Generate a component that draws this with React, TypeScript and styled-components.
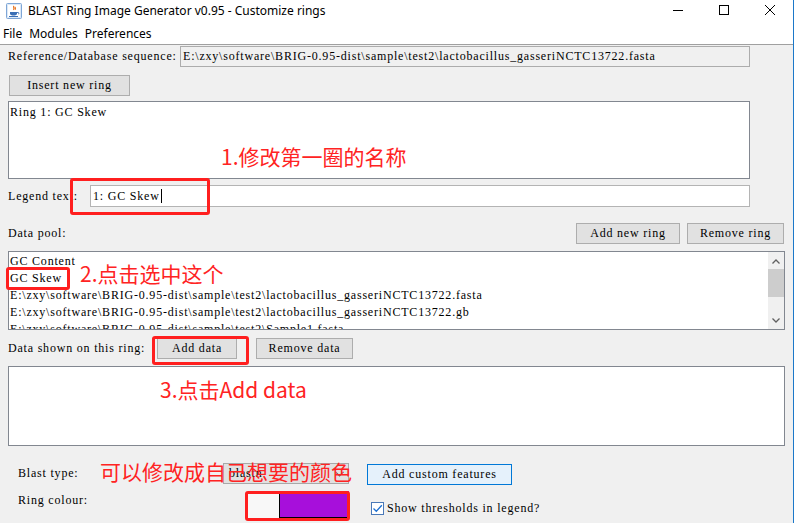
import React from 'react'
import styled, { createGlobalStyle } from 'styled-components'

const GlobalStyle = createGlobalStyle`
  html, body {
    margin: 0;
    padding: 0;
    background: #ffffff;
  }
  #root {
    width: 796px;
    height: 523px;
    overflow: hidden;
  }
`

const uiFont = `"Liberation Serif", "Noto Sans CJK SC", serif`

const Window = styled.div`
  position: relative;
  width: 793px;
  height: 523px;
  background: #f0f0f0;
  border-right: 1px solid #1b78c9;
  display: flex;
  flex-direction: column;
  overflow: hidden;
  font-family: ${uiFont};
  font-size: 12px;
  letter-spacing: 0.8px;
  color: #000;
`

const TitleBar = styled.div`
  height: 23px;
  background: #fff;
  display: flex;
  align-items: center;
  font-family: "Noto Sans", "Liberation Sans", sans-serif;
  font-size: 12px;
  letter-spacing: 0;
`

const AppIcon = styled.svg`
  width: 16px;
  height: 16px;
  margin: 0 6px 2px 6px;
  flex: none;
`

const Title = styled.div`
  flex: 1;
  padding-bottom: 2px;
`

const WinButton = styled.div`
  width: 46px;
  height: 23px;
  display: flex;
  align-items: center;
  justify-content: center;
  padding-bottom: 3px;
  box-sizing: border-box;
`

const MenuBar = styled.div`
  height: 21px;
  background: #fff;
  border-bottom: 1px solid #a0a0a0;
  display: flex;
  align-items: center;
  padding-left: 3px;
  font-family: "Noto Sans", "Liberation Sans", sans-serif;
  font-size: 12px;
  letter-spacing: 0;
  gap: 7px;
`

const Content = styled.div`
  display: flex;
  flex-direction: column;
  padding: 0 8px;
`

const Row = styled.div<{ $top: number; $h: number; $right?: number }>`
  display: flex;
  align-items: center;
  margin-top: ${p => p.$top}px;
  margin-right: ${p => p.$right ?? 0}px;
  height: ${p => p.$h}px;
`

const Label = styled.span<{ $w?: number; $indent?: number }>`
  flex: none;
  width: ${p => (p.$w ? `${p.$w}px` : 'auto')};
  padding-left: ${p => p.$indent ?? 0}px;
  white-space: nowrap;
`

const Field = styled.div`
  flex: 1;
  height: 100%;
  box-sizing: border-box;
  background: #fff;
  border: 1px solid #b4b4b4;
  display: flex;
  align-items: center;
  padding-left: 2px;
  white-space: nowrap;
  overflow: hidden;
`

const ReadField = styled(Field)`
  background: #f0f0f0;
  border-color: #acacac;
`

const Caret = styled.span`
  display: inline-block;
  width: 1px;
  height: 14px;
  background: #000;
  margin-left: 1px;
`

const Button = styled.div<{ $w: number; $ml?: number }>`
  flex: none;
  width: ${p => p.$w}px;
  height: 21px;
  margin-left: ${p => p.$ml ?? 0}px;
  box-sizing: border-box;
  background: #e1e1e1;
  border: 1px solid #adadad;
  display: flex;
  align-items: center;
  justify-content: center;
  white-space: nowrap;
`

const FocusButton = styled(Button)`
  background: #e5f1fb;
  border-color: #0078d7;
`

const TextBox = styled.div<{ $top: number; $h: number; $right?: number }>`
  margin-top: ${p => p.$top}px;
  margin-right: ${p => p.$right ?? 0}px;
  height: ${p => p.$h}px;
  box-sizing: border-box;
  background: #fff;
  border: 1px solid #828790;
  display: flex;
  overflow: hidden;
`

const Lines = styled.div`
  flex: 1;
  padding: 1px 1px;
  line-height: 17px;
  white-space: nowrap;
  overflow: hidden;
`

const Spacer = styled.div`
  flex: 1;
`

const ScrollBar = styled.div`
  width: 16px;
  flex: none;
  background: #f0f0f0;
  display: flex;
  flex-direction: column;
  align-items: center;
`

const ScrollArrow = styled.svg`
  width: 16px;
  height: 17px;
  flex: none;
`

const Thumb = styled.div`
  width: 16px;
  height: 28px;
  background: #cdcdcd;
`

const Grid = styled.div<{ $top: number; $h: number }>`
  display: grid;
  grid-template-columns: 215px 126px auto;
  align-items: center;
  margin-top: ${p => p.$top}px;
  height: ${p => p.$h}px;
`

const Combo = styled.div`
  height: 21px;
  box-sizing: border-box;
  background: #e1e1e1;
  border: 1px solid #a8a8a8;
  display: flex;
  align-items: center;
  justify-content: space-between;
  padding: 0 4px 0 5px;
`

const ColourCell = styled.div`
  display: flex;
  height: 27px;
  align-self: start;
  margin-top: 2px;
`

const BlankPart = styled.div`
  width: 32px;
  margin-left: 24px;
  background: #f8f8f8;
`

const ColourPart = styled.div<{ $c: string }>`
  flex: 1;
  background: ${p => p.$c};
  border-left: 1px solid #000;
  border-bottom: 1px solid #000;
`

const CheckRow = styled.div`
  display: flex;
  align-items: center;
  gap: 3px;
  margin-top: 8px;
  margin-left: 22px;
  white-space: nowrap;
`

const CheckBox = styled.div`
  width: 13px;
  height: 13px;
  box-sizing: border-box;
  border: 1px solid #4a79b8;
  background: #fff;
  display: flex;
  align-items: center;
  justify-content: center;
`

const Note = styled.div<{ $x: number; $y: number }>`
  position: absolute;
  left: ${p => p.$x}px;
  top: ${p => p.$y}px;
  font-family: "Noto Sans CJK SC", "Noto Sans", sans-serif;
  font-size: 21px;
  line-height: 1;
  letter-spacing: 0;
  color: #ff2323;
  white-space: nowrap;
`

const Mark = styled.div<{ $x: number; $y: number; $w: number; $h: number }>`
  position: absolute;
  left: ${p => p.$x}px;
  top: ${p => p.$y}px;
  width: ${p => p.$w}px;
  height: ${p => p.$h}px;
  box-sizing: border-box;
  border: 3px solid #ff1f1f;
  border-radius: 3px;
`

const poolItems = [
  'GC Content',
  'GC Skew',
  'E:\\zxy\\software\\BRIG-0.95-dist\\sample\\test2\\lactobacillus_gasseriNCTC13722.fasta',
  'E:\\zxy\\software\\BRIG-0.95-dist\\sample\\test2\\lactobacillus_gasseriNCTC13722.gb',
  'E:\\zxy\\software\\BRIG-0.95-dist\\sample\\test2\\Sample1.fasta',
]

const App = () => {
  return (
    <>
      <GlobalStyle />
      <Window>
        <TitleBar>
          <AppIcon viewBox="0 0 16 16">
            <rect x="0.5" y="0.5" width="15" height="15" rx="1" fill="#dce9f7" stroke="#7fa6d6" />
            <rect x="2" y="2" width="12" height="12" fill="#fff" />
            <path d="M8 3c-1.5 1.5 1 2-0.5 4M9.5 4c-1 1 0.6 1.4-0.3 2.6" stroke="#e8731e" strokeWidth="1.2" fill="none" />
            <path d="M4 9h7v1.5c0 1.5-1.5 2-3.5 2S4 12 4 10.5z" fill="#3a6fb5" />
            <path d="M11 9.5h1.3c0.8 0 0.8 1.6-0.3 1.6" stroke="#3a6fb5" strokeWidth="0.9" fill="none" />
            <rect x="3" y="13" width="9" height="1" fill="#3a6fb5" />
          </AppIcon>
          <Title>BLAST Ring Image Generator v0.95 - Customize rings</Title>
          <WinButton>
            <svg width="10" height="10" viewBox="0 0 10 10">
              <line x1="0" y1="5.5" x2="10" y2="5.5" stroke="#000" strokeWidth="1" />
            </svg>
          </WinButton>
          <WinButton>
            <svg width="10" height="10" viewBox="0 0 10 10">
              <rect x="0.5" y="0.5" width="9" height="9" fill="none" stroke="#000" strokeWidth="1" />
            </svg>
          </WinButton>
          <WinButton>
            <svg width="10" height="10" viewBox="0 0 10 10">
              <path d="M0 0L10 10M10 0L0 10" stroke="#000" strokeWidth="1" />
            </svg>
          </WinButton>
        </TitleBar>
        <MenuBar>
          <span>File</span>
          <span>Modules</span>
          <span>Preferences</span>
        </MenuBar>

        <Content>
          <Row $top={1} $h={21} $right={35}>
            <Label $w={172}>Reference/Database sequence:</Label>
            <ReadField>E:\zxy\software\BRIG-0.95-dist\sample\test2\lactobacillus_gasseriNCTC13722.fasta</ReadField>
          </Row>

          <Row $top={8} $h={21}>
            <Button $w={121} $ml={1}>Insert new ring</Button>
          </Row>

          <TextBox $top={5} $h={78} $right={35}>
            <Lines style={{ paddingTop: 2 }}>Ring 1: GC Skew</Lines>
          </TextBox>

          <Row $top={6} $h={22} $right={35}>
            <Label $w={82}>Legend text:</Label>
            <Field>
              1: GC Skew<Caret />
            </Field>
          </Row>

          <Row $top={16} $h={21}>
            <Label>Data pool:</Label>
            <Spacer />
            <Button $w={104}>Add new ring</Button>
            <Button $w={97} $ml={7}>Remove ring</Button>
            <Label $w={1} />
          </Row>

          <TextBox $top={7} $h={79}>
            <Lines>
              {poolItems.map(item => (
                <div key={item}>{item}</div>
              ))}
            </Lines>
            <ScrollBar>
              <ScrollArrow viewBox="0 0 16 17">
                <path d="M4.5 11.5L8 8l3.5 3.5" stroke="#606060" strokeWidth="1.3" fill="none" />
              </ScrollArrow>
              <Thumb />
              <Spacer />
              <ScrollArrow viewBox="0 0 16 17">
                <path d="M4.5 6.5L8 10l3.5-3.5" stroke="#606060" strokeWidth="1.3" fill="none" />
              </ScrollArrow>
            </ScrollBar>
          </TextBox>

          <Row $top={8} $h={21}>
            <Label $w={149}>Data shown on this ring:</Label>
            <Button $w={80}>Add data</Button>
            <Button $w={97} $ml={19}>Remove data</Button>
          </Row>

          <TextBox $top={7} $h={80} />

          <Grid $top={16} $h={21}>
            <Label $indent={10}>Blast type:</Label>
            <Combo>
              <span>blastn</span>
              <svg width="9" height="6" viewBox="0 0 9 6">
                <path d="M0.5 0.8L4.5 4.8L8.5 0.8" stroke="#606060" strokeWidth="1.2" fill="none" />
              </svg>
            </Combo>
            <FocusButton $w={145} $ml={18} style={{ marginTop: 2 }}>Add custom features</FocusButton>
          </Grid>

          <Grid $top={6} $h={31}>
            <Label $indent={10} style={{ alignSelf: 'start', marginTop: 4 }}>Ring colour:</Label>
            <ColourCell>
              <BlankPart />
              <ColourPart $c="#a70fdb" />
            </ColourCell>
            <CheckRow>
              <CheckBox>
                <svg width="11" height="11" viewBox="0 0 11 11">
                  <path d="M1.5 5.5L4.3 8.3L9.8 2.3" stroke="#1c6fd1" strokeWidth="1.3" fill="none" />
                </svg>
              </CheckBox>
              <span>Show thresholds in legend?</span>
            </CheckRow>
          </Grid>
        </Content>

        <Note $x={221} $y={146}>1.修改第一圈的名称</Note>
        <Mark $x={70} $y={178} $w={140} $h={37} />
        <Note $x={80} $y={263}>2.点击选中这个</Note>
        <Mark $x={6} $y={267} $w={64} $h={23} />
        <Mark $x={152} $y={336} $w={97} $h={29} />
        <Note $x={160} $y={379}>3.点击Add data</Note>
        <Note $x={100} $y={461}>可以修改成自己想要的颜色</Note>
        <Mark $x={245} $y={491} $w={105} $h={30} />
      </Window>
    </>
  )
}

export default App
